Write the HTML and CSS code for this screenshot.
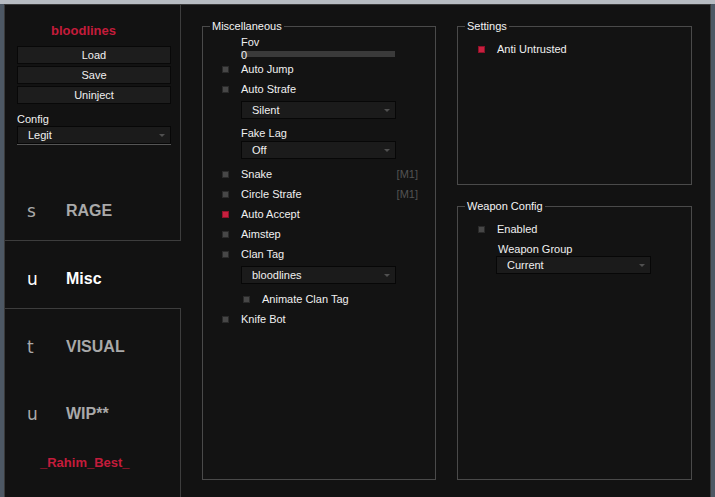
FILE: index.html
```
<HTML>
<HEAD>
<TITLE>bloodlines</TITLE>
<link rel="stylesheet" href="styles.css">
</HEAD>

<BODY>

<DIV CLASS="window">

    <!-- left column: logo, config buttons and the tab list -->
    <DIV CLASS="sidebar">
        <DIV CLASS="brand">
            <DIV CLASS="logo">bloodlines</DIV>
            <DIV CLASS="button">Load</DIV>
            <DIV CLASS="button">Save</DIV>
            <DIV CLASS="button">Uninject</DIV>
            <DIV CLASS="configLabel">Config</DIV>
            <DIV CLASS="combo sideCombo">Legit</DIV>
        </DIV>
        <DIV CLASS="tab"><SPAN CLASS="tabIcon">s</SPAN><SPAN CLASS="tabLabel">RAGE</SPAN></DIV>
        <DIV CLASS="tab active"><SPAN CLASS="tabIcon">u</SPAN><SPAN CLASS="tabLabel">Misc</SPAN></DIV>
        <DIV CLASS="tab"><SPAN CLASS="tabIcon">t</SPAN><SPAN CLASS="tabLabel">VISUAL</SPAN></DIV>
        <DIV CLASS="tab"><SPAN CLASS="tabIcon">u</SPAN><SPAN CLASS="tabLabel">WIP**</SPAN></DIV>
        <DIV CLASS="footer">_Rahim_Best_</DIV>
    </DIV>

    <!-- right side: option groups of the Misc tab -->
    <DIV CLASS="content">

        <FIELDSET CLASS="group miscGroup">
            <LEGEND>Miscellaneous</LEGEND>

            <DIV CLASS="fieldLabel fovLabel">Fov</DIV>
            <DIV CLASS="slider">0</DIV>

            <DIV CLASS="check"><SPAN CLASS="box"></SPAN>Auto Jump</DIV>
            <DIV CLASS="check"><SPAN CLASS="box"></SPAN>Auto Strafe</DIV>
            <DIV CLASS="combo comboSilent">Silent</DIV>

            <DIV CLASS="fieldLabel lagLabel">Fake Lag</DIV>
            <DIV CLASS="combo comboLag">Off</DIV>

            <DIV CLASS="check snake"><SPAN CLASS="box"></SPAN>Snake<SPAN CLASS="bind">[M1]</SPAN></DIV>
            <DIV CLASS="check"><SPAN CLASS="box"></SPAN>Circle Strafe<SPAN CLASS="bind">[M1]</SPAN></DIV>
            <DIV CLASS="check"><SPAN CLASS="box on"></SPAN>Auto Accept</DIV>
            <DIV CLASS="check"><SPAN CLASS="box"></SPAN>Aimstep</DIV>
            <DIV CLASS="check"><SPAN CLASS="box"></SPAN>Clan Tag</DIV>
            <DIV CLASS="combo comboTag">bloodlines</DIV>
            <DIV CLASS="check sub"><SPAN CLASS="box"></SPAN>Animate Clan Tag</DIV>
            <DIV CLASS="check"><SPAN CLASS="box"></SPAN>Knife Bot</DIV>
        </FIELDSET>

        <DIV CLASS="column">
            <FIELDSET CLASS="group settingsGroup">
                <LEGEND>Settings</LEGEND>
                <DIV CLASS="check first"><SPAN CLASS="box on"></SPAN>Anti Untrusted</DIV>
            </FIELDSET>

            <FIELDSET CLASS="group weaponGroup">
                <LEGEND>Weapon Config</LEGEND>
                <DIV CLASS="check first"><SPAN CLASS="box"></SPAN>Enabled</DIV>
                <DIV CLASS="fieldLabel weaponLabel">Weapon Group</DIV>
                <DIV CLASS="combo">Current</DIV>
            </FIELDSET>
        </DIV>

    </DIV>

</DIV>

</BODY>
</HTML>
```

FILE: styles.css
```
/* dark cheat-menu look, colours picked off the screenshot */
BODY
{
    margin:             0;
    overflow:           hidden;
    background:         linear-gradient(#b7bcc2 0 4px, #4d5864 4px);
    font-family:        "Liberation Sans", Arial, sans-serif;
    font-size:          11px;
    color:              #f0f0f0;
}

.window
{
    display:            flex;
    width:              707px;
    height:             500px;
    margin:             4px 0 0 4px;
    box-sizing:         border-box;
    border:             1px solid #3a3a3a;
    border-bottom:      none;
    background-color:   #121212;
}

/* ---- sidebar ---- */

.sidebar
{
    display:            flex;
    flex-direction:     column;
    width:              176px;
}

.brand
{
    height:             168px;
    box-sizing:         border-box;
    padding:            18px 0 0 12px;
    border-right:       1px solid #3d3d3d;
}

.logo
{
    padding-left:       34px;
    font-size:          13px;
    font-weight:        bold;
    line-height:        16px;
    color:              #c41c3b;
}

.button
{
    width:              154px;
    height:             18px;
    margin-top:         2px;
    box-sizing:         border-box;
    border:             1px solid #080808;
    background-color:   #1d1d1d;
    text-align:         center;
    line-height:        16px;
}

.logo + .button
{
    margin-top:         7px;
}

.configLabel
{
    margin-top:         8px;
    line-height:        14px;
}

.tab
{
    display:            flex;
    align-items:        center;
    height:             67px;
    box-sizing:         border-box;
    padding:            8px 0 0 22px;
    border-right:       1px solid #3d3d3d;
    color:              #a9a9a9;
}

.tab.active
{
    height:             69px;
    border-top:         1px solid #3d3d3d;
    border-bottom:      1px solid #3d3d3d;
    border-right:       none;
    color:              #ffffff;
}

.tabIcon
{
    width:              39px;
    font-family:        "DejaVu Sans", sans-serif;
    font-size:          17px;
}

.tabLabel
{
    font-size:          16px;
    font-weight:        bold;
}

.footer
{
    flex:               1;
    padding:            12px 0 0 35px;
    border-right:       1px solid #3d3d3d;
    font-size:          13px;
    font-weight:        bold;
    line-height:        16px;
    color:              #c41c3b;
}

/* ---- option groups ---- */

.content
{
    flex:               1;
    display:            grid;
    grid-template-columns: 234px 235px;
    column-gap:         21px;
    align-items:        start;
    padding:            14px 0 0 21px;
}

.column
{
    display:            flex;
    flex-direction:     column;
    gap:                14px;
}

.group
{
    margin:             0;
    min-width:          0;
    box-sizing:         border-box;
    padding:            0 7px;
    border:             1px solid #4a4a4a;
    background-color:   #131313;
}

.group LEGEND
{
    padding:            0 2px;
    line-height:        14px;
    color:              #f4f4f4;
}

.miscGroup      { height: 461px; }
.settingsGroup  { height: 166px; }
.weaponGroup    { height: 281px; }

.fieldLabel
{
    margin-left:        31px;
    line-height:        14px;
}

.fovLabel       { margin-top: 2px; }
.lagLabel       { margin-top: 7px; }
.weaponLabel    { margin: 3px 0 0 33px; }

.slider
{
    width:              154px;
    height:             10px;
    margin-left:        31px;
    background:         linear-gradient(transparent 2px, #3a3a3a 2px, #3a3a3a 8px, transparent 8px);
    line-height:        12px;
}

.check
{
    display:            flex;
    align-items:        center;
    height:             20px;
}

.check.first    { margin-top: 6px; }
.check.snake    { margin-top: 5px; }
.check.sub      { margin-top: 5px; }

.box
{
    width:              7px;
    height:             7px;
    margin:             0 12px;
    box-sizing:         border-box;
    border:             1px solid #2a2a2a;
    background-color:   #474747;
}

.box.on
{
    border-color:       #8e1229;
    background-color:   #c8203f;
}

.settingsGroup .box,
.weaponGroup .box
{
    margin-left:        13px;
}

.check.sub .box
{
    margin-left:        33px;
}

.bind
{
    margin:             0 10px 0 auto;
    color:              #525252;
}

.combo
{
    display:            flex;
    align-items:        center;
    width:              155px;
    height:             18px;
    margin-left:        31px;
    box-sizing:         border-box;
    padding:            0 5px 0 10px;
    border:             1px solid #070707;
    background-color:   #1b1b1b;
}

.combo::after
{
    content:            "";
    margin-left:        auto;
    border-left:        3px solid transparent;
    border-right:       3px solid transparent;
    border-top:         3px solid #505050;
}

.sideCombo
{
    width:              154px;
    margin-left:        0;
    box-shadow:         0 1px 0 #555555;
}

.comboSilent    { margin-top: 2px; }
.comboLag       { margin-top: 1px; }
.comboTag       { margin-top: 2px; }
```
